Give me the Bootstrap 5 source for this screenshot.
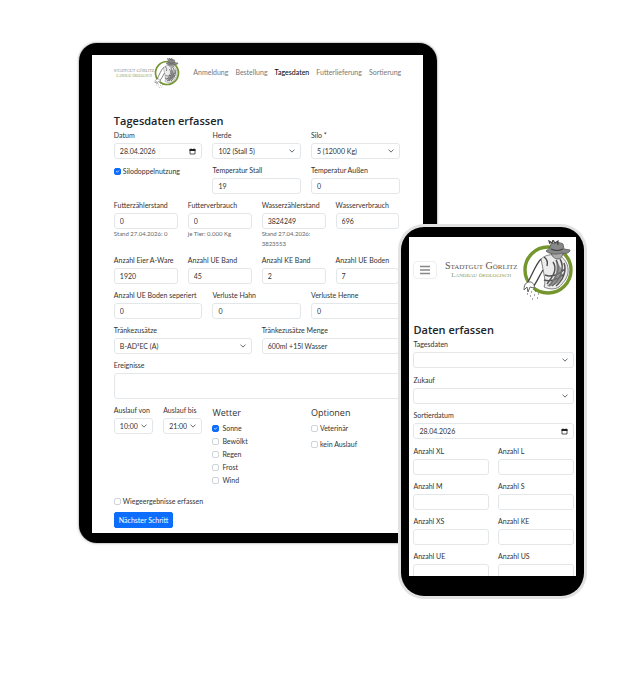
<!DOCTYPE html>
<html lang="de">
<head>
<meta charset="utf-8">
<meta name="viewport" content="width=device-width, initial-scale=1">
<title>Stadtgut Görlitz – Tagesdaten</title>
<link href="https://cdn.jsdelivr.net/npm/bootstrap@5.3.0/dist/css/bootstrap.min.css" rel="stylesheet">
<style>
body{font-family:Lato,"Open Sans",sans-serif;font-size:7px;line-height:11px;color:#333;background:#fff}
.stage{padding:43px 0 90px 12.4%}
.device{background:#000;min-width:0}
.tablet{flex:0 0 64.2%;padding:12px 14px 10px 13px;border-radius:18px;box-shadow:0 0 0 1px #d2d2d2,0 0 3px 1px #ddd}
.phone{flex:0 0 32.7%;margin:184px 0 0 -6.3%;padding:10px 8px 20px;border-radius:23px;box-shadow:0 0 0 3px #e2e2e2;z-index:1}
.screen{background:#fff}
.tablet .screen{padding:0 23px 5px 22px}
.phone .screen{padding:0 2px 0 4px;height:339px;overflow:hidden}
.row{--bs-gutter-x:10px}
.field{margin-bottom:6px}
.phone .wide{margin-bottom:7px}
.form-label{display:block;margin:0 0 2px;line-height:11px;white-space:nowrap}
.form-control,.form-select{height:16px;min-height:0;padding:0 5px;font-size:7px;line-height:14px;color:#333;border:1px solid #e3e7ea;border-radius:3px}
.form-select{padding-right:14px;background-size:6px 6px;background-position:right 5px center}
textarea.form-control{height:26px;resize:none}
.date-box{background-image:url("data:image/svg+xml,%3Csvg xmlns='http://www.w3.org/2000/svg' viewBox='0 0 14 14'%3E%3Cpath d='M2 3h10v9H2z' fill='none' stroke='%23222' stroke-width='1.5'/%3E%3Cpath d='M1 2h12v4H1zM3 1h2v2H3zM9 1h2v2H9z' fill='%23222'/%3E%3C/svg%3E");background-repeat:no-repeat;background-size:7px 7px;background-position:right 5px center}
.hint{display:block;font-size:6px;line-height:10px;color:#666}
.phone .row{--bs-gutter-x:9px}
.title{font-family:"Open Sans",sans-serif;font-size:11px;line-height:14px;font-weight:600;color:#212529;margin:0 0 2px}
.subtitle{font-family:"Open Sans",sans-serif;font-size:9px;line-height:15px;font-weight:500;margin:0 0 2px}
.tick{display:flex;align-items:center;min-height:13px;gap:2px;white-space:nowrap}
.tick.apart{gap:3px}
.tick .form-check-input{width:7px;height:7px;margin:0;flex:none;border-color:#cfd4d9;border-radius:2px}
.tick .form-check-input:checked{border-color:#0d6efd}
.options{gap:3px}
.btn-next{font-size:7px;line-height:14px;padding:0 4px;border-radius:2px}
.top{height:35px;margin-bottom:24px}
.top a{color:#777;text-decoration:none}
.top .links{gap:7px;margin-left:13px}
.top .links a.current{color:#111;font-weight:500}
.brand-text{font-family:"Liberation Serif",serif;font-variant:small-caps;text-align:center;white-space:nowrap;color:#555}
.brand-text span{display:block;color:#7f9a55}
.top .brand-text{font-size:5px;line-height:5px;color:#888}
.top .brand-text span{font-size:4px}
.top svg{width:26px;height:30px}
.phone .brand-text{font-size:10px;line-height:10px}
.phone .brand-text span{font-size:7px;line-height:8px}
.phone svg.emblem{width:52px;height:60px}
.phone-top{height:64px;margin-bottom:22px;padding-top:2px}
.menu-btn{width:24px;height:18px;padding:0;border:1px solid #eee;border-radius:4px}
.menu-btn svg{width:10px;height:10px}
</style>
<script src="https://cdn.jsdelivr.net/npm/bootstrap@5.3.0/dist/js/bootstrap.bundle.min.js"></script>
</head>
<body>
<svg class="d-none" aria-hidden="true">
  <symbol id="sower" viewBox="0 0 52 60">
    <circle cx="26" cy="30" r="23" fill="#fff" stroke="#75962f" stroke-width="3.4"/>
    <path d="M20 19C14 24 10 34 6 43l-3 6 4 3 5-4 9-17z" fill="#fff"/>
    <path d="M19 19c4-4 10-5 16-4 8 2 12 10 11 18-1 6-5 10-9 14-5 3-11 2-15 0 2-5 0-12-1-18z" fill="#ececec" stroke="#666" stroke-width=".8"/>
    <path d="M31 22c4 6 2 12-6 22M34 20c5 8 1 17-7 26M38 19c5 8 1 20-8 27M42 23c3 8-1 17-8 23M23 35c5 2 12 1 20-6M22 40c6 2 14 0 20-6" fill="none" stroke="#555" stroke-width="1.5"/>
    <path d="M34 22c6 5 8 12 4 19-4 4-9 6-13 5 7-6 11-13 9-24z" fill="#777" opacity=".75"/>
    <path d="M19 19C14 24 11 33 6 42M21 30c-4 6-6 12-10 17M22 17c3 2 4 5 3 9" fill="none" stroke="#444" stroke-width="1.3"/>
    <path d="M6 42c-3 1-4 4-4 8l3-3 1 5 2-5 4 1c1-3-1-5-3-6z" fill="#fff" stroke="#555" stroke-width=".9"/>
    <path d="M29 11c0 4 2 7 6 8 4 0 6-3 6-7z" fill="#aaa" stroke="#555" stroke-width=".8"/>
    <path d="M24 11c3-2 4-3 5-7 3-2 9-2 12 0l1 5 6 1c0 3-4 4-8 3-6 2-13 1-16-2z" fill="#888" stroke="#555" stroke-width=".8"/>
    <path d="M29 9c4 2 8 2 12 0M28 4l-1-3 3 2 1-3 2 3 3-2v4" fill="none" stroke="#444" stroke-width="1.2"/>
    <path d="M5 54h1M9 52h1M13 51h1M8 56h1M12 55h1M16 54h1M10 59h1M15 58h1" stroke="#555" stroke-width="1.2"/>
  </symbol>
</svg>

<main class="stage d-flex align-items-start">
  <section class="device tablet" aria-label="Tablet">
    <div class="screen">
      <nav class="top d-flex align-items-center">
        <a href="#" class="brand d-flex align-items-center">
          <div class="brand-text">Stadtgut Görlitz<span>Landbau ökologisch</span></div>
          <svg class="emblem" aria-hidden="true"><use href="#sower"/></svg>
        </a>
        <div class="links d-flex">
          <a href="#">Anmeldung</a><a href="#">Bestellung</a><a href="#" class="current" aria-current="page">Tagesdaten</a><a href="#">Futterlieferung</a><a href="#">Sortierung</a>
        </div>
      </nav>
      <form>
        <h1 class="title">Tagesdaten erfassen</h1>
        <div class="row">
          <div class="col-4 field"><label class="form-label" for="datum">Datum</label><input class="form-control date-box" id="datum" value="28.04.2026"></div>
          <div class="col-4 field"><label class="form-label" for="herde">Herde</label><select class="form-select" id="herde"><option>102 (Stall 5)</option></select></div>
          <div class="col-4 field"><label class="form-label" for="silo">Silo *</label><select class="form-select" id="silo"><option>5 (12000 Kg)</option></select></div>
        </div>
        <div class="row">
          <div class="col-4 field"><div class="tick"><input class="form-check-input" type="checkbox" id="doppel" checked><label for="doppel">Silodoppelnutzung</label></div></div>
          <div class="col-4 field"><label class="form-label" for="tstall">Temperatur Stall</label><input class="form-control" id="tstall" value="19"></div>
          <div class="col-4 field"><label class="form-label" for="taussen">Temperatur Außen</label><input class="form-control" id="taussen" value="0"></div>
        </div>
        <div class="row">
          <div class="col-3 field"><label class="form-label" for="fz">Futterzählerstand</label><input class="form-control" id="fz" value="0"><small class="hint">Stand 27.04.2026: 0</small></div>
          <div class="col-3 field"><label class="form-label" for="fv">Futterverbrauch</label><input class="form-control" id="fv" value="0"><small class="hint">je Tier: 0.000 Kg</small></div>
          <div class="col-3 field"><label class="form-label" for="wz">Wasserzählerstand</label><input class="form-control" id="wz" value="3824249"><small class="hint">Stand 27.04.2026:<br>3823553</small></div>
          <div class="col-3 field"><label class="form-label" for="wv">Wasserverbrauch</label><input class="form-control" id="wv" value="696"></div>
        </div>
        <div class="row">
          <div class="col-3 field"><label class="form-label" for="ea">Anzahl Eier A-Ware</label><input class="form-control" id="ea" value="1920"></div>
          <div class="col-3 field"><label class="form-label" for="ueb">Anzahl UE Band</label><input class="form-control" id="ueb" value="45"></div>
          <div class="col-3 field"><label class="form-label" for="keb">Anzahl KE Band</label><input class="form-control" id="keb" value="2"></div>
          <div class="col-3 field"><label class="form-label" for="uebo">Anzahl UE Boden</label><input class="form-control" id="uebo" value="7"></div>
        </div>
        <div class="row">
          <div class="col-4 field"><label class="form-label" for="sep">Anzahl UE Boden seperiert</label><input class="form-control" id="sep" value="0"></div>
          <div class="col-4 field"><label class="form-label" for="vhahn">Verluste Hahn</label><input class="form-control" id="vhahn" value="0"></div>
          <div class="col-4 field"><label class="form-label" for="vhenne">Verluste Henne</label><input class="form-control" id="vhenne" value="0"></div>
        </div>
        <div class="row">
          <div class="col-6 field"><label class="form-label" for="tz">Tränkezusätze</label><select class="form-select" id="tz"><option>B-AD³EC (A)</option></select></div>
          <div class="col-6 field"><label class="form-label" for="tm">Tränkezusätze Menge</label><input class="form-control" id="tm" value="600ml +15l Wasser"></div>
        </div>
        <div class="field"><label class="form-label" for="er">Ereignisse</label><textarea class="form-control" id="er"></textarea></div>
        <div class="row field">
          <div class="col-2"><label class="form-label" for="von">Auslauf von</label><select class="form-select" id="von"><option>10:00</option></select></div>
          <div class="col-2"><label class="form-label" for="bis">Auslauf bis</label><select class="form-select" id="bis"><option>21:00</option></select></div>
          <div class="col-4">
            <h2 class="subtitle">Wetter</h2>
            <div class="tick apart"><input class="form-check-input" type="checkbox" id="w1" checked><label for="w1">Sonne</label></div>
            <div class="tick apart"><input class="form-check-input" type="checkbox" id="w2"><label for="w2">Bewölkt</label></div>
            <div class="tick apart"><input class="form-check-input" type="checkbox" id="w3"><label for="w3">Regen</label></div>
            <div class="tick apart"><input class="form-check-input" type="checkbox" id="w4"><label for="w4">Frost</label></div>
            <div class="tick apart"><input class="form-check-input" type="checkbox" id="w5"><label for="w5">Wind</label></div>
          </div>
          <div class="col-4">
            <h2 class="subtitle">Optionen</h2>
            <div class="options d-flex flex-column">
              <div class="tick"><input class="form-check-input" type="checkbox" id="o1"><label for="o1">Veterinär</label></div>
              <div class="tick"><input class="form-check-input" type="checkbox" id="o2"><label for="o2">kein Auslauf</label></div>
            </div>
          </div>
        </div>
        <div class="tick mt-2 mb-1"><input class="form-check-input" type="checkbox" id="wiege"><label for="wiege">Wiegeergebnisse erfassen</label></div>
        <button type="button" class="btn btn-primary btn-next d-block">Nächster Schritt</button>
      </form>
    </div>
  </section>

  <section class="device phone" aria-label="Smartphone">
    <div class="screen">
      <nav class="phone-top d-flex align-items-center justify-content-between">
        <button type="button" class="btn menu-btn d-flex align-items-center justify-content-center" aria-label="Menü"><svg viewBox="0 0 10 10" aria-hidden="true"><path d="M0 1.5h10M0 5h10M0 8.5h10" stroke="#888" stroke-width="1.3"/></svg></button>
        <a href="#" class="d-flex align-items-center gap-1 text-decoration-none">
          <div class="brand-text">Stadtgut Görlitz<span>Landbau ökologisch</span></div>
          <svg class="emblem" aria-hidden="true"><use href="#sower"/></svg>
        </a>
      </nav>
      <form>
        <h1 class="title">Daten erfassen</h1>
        <div class="field wide"><label class="form-label" for="ptd">Tagesdaten</label><select class="form-select" id="ptd"><option></option></select></div>
        <div class="field"><label class="form-label" for="pzk">Zukauf</label><select class="form-select" id="pzk"><option></option></select></div>
        <div class="field wide"><label class="form-label" for="psd">Sortierdatum</label><input class="form-control date-box" id="psd" value="28.04.2026"></div>
        <div class="row">
          <div class="col-6 field"><label class="form-label" for="xl">Anzahl XL</label><input class="form-control" id="xl"></div>
          <div class="col-6 field"><label class="form-label" for="l">Anzahl L</label><input class="form-control" id="l"></div>
          <div class="col-6 field"><label class="form-label" for="m">Anzahl M</label><input class="form-control" id="m"></div>
          <div class="col-6 field"><label class="form-label" for="s">Anzahl S</label><input class="form-control" id="s"></div>
          <div class="col-6 field"><label class="form-label" for="xs">Anzahl XS</label><input class="form-control" id="xs"></div>
          <div class="col-6 field"><label class="form-label" for="ke">Anzahl KE</label><input class="form-control" id="ke"></div>
          <div class="col-6 field"><label class="form-label" for="ue">Anzahl UE</label><input class="form-control" id="ue"></div>
          <div class="col-6 field"><label class="form-label" for="us">Anzahl US</label><input class="form-control" id="us"></div>
        </div>
      </form>
    </div>
  </section>
</main>
</body>
</html>
